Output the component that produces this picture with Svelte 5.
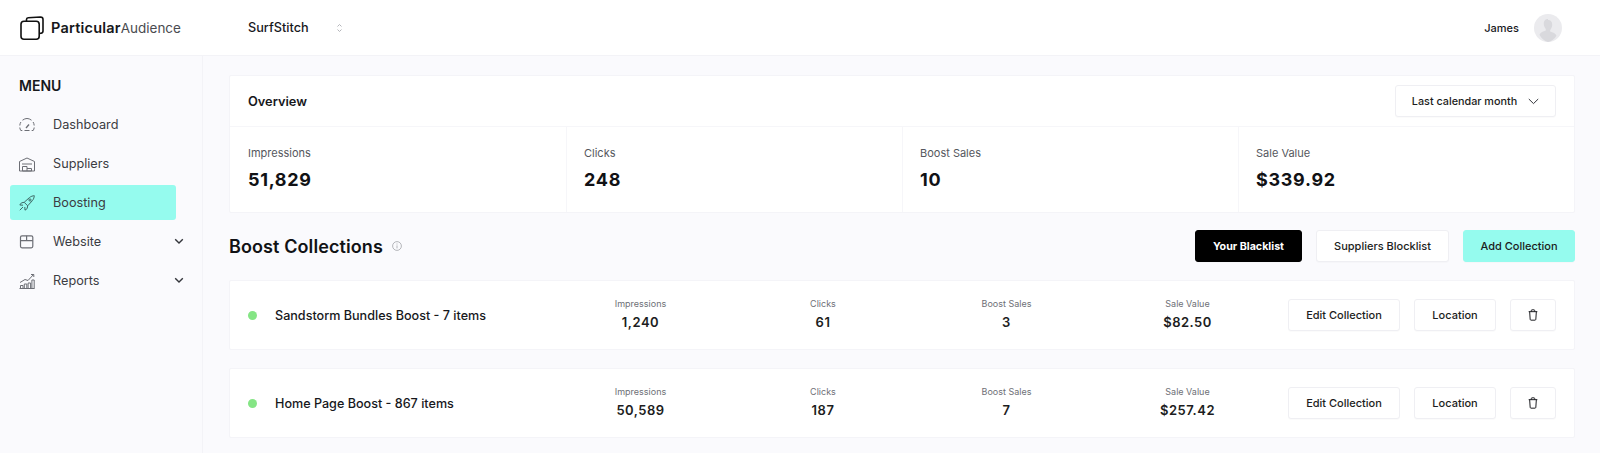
<script>
	const menu = [
		{ label: 'Dashboard', icon: 'gauge' },
		{ label: 'Suppliers', icon: 'warehouse' },
		{ label: 'Boosting', icon: 'rocket', active: true },
		{ label: 'Website', icon: 'box', more: true },
		{ label: 'Reports', icon: 'chart', more: true }
	];

	const overview = [
		{ label: 'Impressions', value: '51,829' },
		{ label: 'Clicks', value: '248' },
		{ label: 'Boost Sales', value: '10' },
		{ label: 'Sale Value', value: '$339.92' }
	];

	const collections = [
		{
			name: 'Sandstorm Bundles Boost - 7 items',
			stats: [
				{ label: 'Impressions', value: '1,240' },
				{ label: 'Clicks', value: '61' },
				{ label: 'Boost Sales', value: '3' },
				{ label: 'Sale Value', value: '$82.50' }
			]
		},
		{
			name: 'Home Page Boost - 867 items',
			stats: [
				{ label: 'Impressions', value: '50,589' },
				{ label: 'Clicks', value: '187' },
				{ label: 'Boost Sales', value: '7' },
				{ label: 'Sale Value', value: '$257.42' }
			]
		}
	];
</script>

<div class="page">
	<header class="topbar">
		<div class="brand">
			<svg width="24" height="24" viewBox="0 0 24 24" fill="none" stroke="#111" stroke-width="1.6" stroke-linejoin="round">
				<path d="M6.5 5.2 V3.6 Q6.500 2 8.200 1.800 L20.500 1 Q23 1 23 3.400 V15 Q23 17 21 17.200 L19.300 17.400" />
				<rect x="1" y="5.200" width="18.200" height="18" rx="3" />
			</svg>
			<span class="logotype"><b>Particular</b>Audience</span>
		</div>
		<div class="account">
			<span>SurfStitch</span>
			<svg width="7" height="10" viewBox="0 0 7 10" fill="none" stroke="#b4b5ba" stroke-width="1">
				<path d="M1.500 3.500 3.500 1.500 5.500 3.500M1.500 6.500 3.500 8.500 5.500 6.500" />
			</svg>
		</div>
		<div class="user">
			<span>James</span>
			<div class="avatar">
				<svg width="28" height="28" viewBox="0 0 28 28">
					<circle cx="14" cy="14" r="14" fill="#ebebee" />
					<path d="M14 5c-3 0-4.400 2.200-4.200 5 .1 2 .9 3.800 2 4.900v1.600c-2.500 1-5.600 1.800-6.300 4.200A14 14 0 0 0 14 28a14 14 0 0 0 8.500-6.300c-.7-2.400-3.800-3.200-6.300-4.200v-1.600c1.100-1.100 1.900-2.900 2-4.900.2-2.800-1.200-5-4.200-5z" fill="#d9d9dd" />
				</svg>
			</div>
		</div>
	</header>

	<div class="body">
		<aside class="sidebar">
			<h2>MENU</h2>
			<nav>
				{#each menu as item}
					<div class="item" class:active={item.active}>
						<svg class="icon" width="18" height="18" viewBox="0 0 18 18" fill="none" stroke-width="1">
							{#if item.icon === 'gauge'}
								<path d="M1.800 9.500A7.400 7.400 0 0 1 2.900 6M4.500 4.200A7.400 7.400 0 0 1 13.500 4.200M15.100 6A7.400 7.400 0 0 1 16.200 9.500" />
								<path d="M1.800 11.500q.1 1.600 1 3h1.500M16.200 11.500q-.1 1.600-1 3h-1.500M6.500 14.500h5" />
								<path d="M8 12 11 8.500" stroke-width="1.300" />
							{:else if item.icon === 'warehouse'}
								<path d="M1.500 16V6.500L9 3l7.500 3.500V16z" />
								<path d="M4 9h10M4.500 16v-4.500h4.500V16M9 13.500h4.500V16M4.500 16h9" />
							{:else if item.icon === 'rocket'}
								<path d="M6.200 8.300 11.500 3.500c1.500-1.200 3.300-1.700 4.800-1.800-.1 1.500-.6 3.300-1.800 4.800L9.700 11.800z" />
								<path d="M6.200 8.300 3.500 8.800 1.800 11l3.200.2M9.700 11.800 9.200 14.500 7 16.200l-.2-3.200" />
								<path d="M5 13 1.800 16.200" />
								<circle cx="12" cy="6" r="1.100" />
							{:else if item.icon === 'box'}
								<rect x="2.500" y="2.800" width="12.300" height="12" rx="1.500" stroke-width="1.200" />
								<path d="M2.500 7.600h12.300M8.600 2.800v4.800" stroke-width="1.200" />
							{:else}
								<path d="M1.500 16.500h15M2.500 16.500v-3h2.500v3M6.300 16.500v-4.500h2.500v4.500M10.100 16.500v-5.500h2.500v5.500M13.900 16.500V8h2.300v8.500" />
								<path d="M2 10.500 7 7.500l3 1 5.500-6M13 2.500h2.800v2.500" />
							{/if}
						</svg>
						<span class="label">{item.label}</span>
						{#if item.more}
							<svg class="chev" width="10" height="7" viewBox="0 0 10 7" fill="none" stroke="#33353b" stroke-width="1.400">
								<path d="M1.200 1.200 5 5l3.800-3.800" />
							</svg>
						{/if}
					</div>
				{/each}
			</nav>
		</aside>

		<main class="content">
			<section class="card overview">
				<div class="overview-head">
					<h3>Overview</h3>
					<button class="btn range">
						Last calendar month
						<svg width="11" height="7" viewBox="0 0 11 7" fill="none" stroke="#33353b" stroke-width="1">
							<path d="M.8 1 5.500 5.600 10.200 1" />
						</svg>
					</button>
				</div>
				<div class="overview-stats">
					{#each overview as stat}
						<div class="overview-stat">
							<div class="stat-label">{stat.label}</div>
							<div class="stat-value">{stat.value}</div>
						</div>
					{/each}
				</div>
			</section>

			<div class="section-head">
				<h1>Boost Collections</h1>
				<svg class="info" width="10" height="10" viewBox="0 0 10 10" fill="none" stroke="#a3a5aa" stroke-width=".8">
					<circle cx="5" cy="5" r="4.400" />
					<path d="M5 4.400v3M5 2.500v1" />
				</svg>
				<div class="actions">
					<button class="btn dark">Your Blacklist</button>
					<button class="btn blocklist">Suppliers Blocklist</button>
					<button class="btn mint">Add Collection</button>
				</div>
			</div>

			{#each collections as row}
				<section class="card row">
					<span class="dot"></span>
					<div class="name">{row.name}</div>
					<div class="row-stats">
						{#each row.stats as stat}
							<div class="row-stat">
								<div class="row-label">{stat.label}</div>
								<div class="row-value">{stat.value}</div>
							</div>
						{/each}
					</div>
					<div class="row-actions">
						<button class="btn edit">Edit Collection</button>
						<button class="btn location">Location</button>
						<button class="btn trash" aria-label="Delete">
							<svg width="10" height="12" viewBox="0 0 12 14" fill="none" stroke="#1c1d21" stroke-width="1.200" stroke-linejoin="round">
								<path d="M.8 3h10.400M2 3l.6 9.200q.1 1 1 1h4.800q.9 0 1-1L10 3M4 3V1.500q0-.7.7-.7h2.600q.7 0 .7.7V3" />
							</svg>
						</button>
					</div>
				</section>
			{/each}
		</main>
	</div>
</div>

<style>
	:global(body) {
		background: #fafafd;
		font-family: Inter, "Liberation Sans", sans-serif;
		color: #17181c;
	}

	.page {
		height: 453px;
		overflow: hidden;
		display: flex;
		flex-direction: column;
	}

	.topbar {
		height: 56px;
		flex: none;
		background: #fff;
		border-bottom: 1px solid #f3f3f7;
		display: flex;
		align-items: center;
		padding: 0 38px 0 20px;
		box-sizing: border-box;
	}
	.brand {
		width: 228px;
		display: flex;
		align-items: center;
		gap: 7px;
	}
	.logotype {
		font-size: 13.500px;
		font-weight: 400;
		color: #4a4b50;
		margin-top: -1px;
	}
	.logotype b {
		font-size: 14.500px;
		font-weight: 600;
		letter-spacing: 0.2px;
		color: #16171a;
	}
	.account {
		display: flex;
		align-items: center;
		gap: 27px;
		font-size: 12.700px;
		font-weight: 500;
	}
	.user {
		margin-left: auto;
		display: flex;
		align-items: center;
		gap: 15px;
		font-size: 11px;
		font-weight: 500;
	}
	.avatar {
		height: 28px;
	}

	.body {
		flex: 1;
		display: flex;
	}

	.sidebar {
		width: 203px;
		flex: none;
		box-sizing: border-box;
		border-right: 1px solid #f3f3f7;
		padding: 21px 0 0 10px;
	}
	.sidebar h2 {
		margin: 0 0 12px 9px;
		font-size: 14px;
		line-height: 18px;
		font-weight: 600;
	}
	nav {
		display: flex;
		flex-direction: column;
		gap: 4px;
		width: 166px;
	}
	.item {
		height: 35px;
		border-radius: 3px;
		display: flex;
		align-items: center;
		padding-left: 8px;
		font-size: 12.700px;
		color: #3b3c42;
		position: relative;
	}
	.item.active {
		background: #95fbee;
	}
	.icon {
		flex: none;
		margin-right: 17px;
		stroke: #6c6e75;
	}
	.item.active .icon {
		stroke: #3e6a66;
	}
	.chev {
		position: absolute;
		right: -8px;
		top: 14px;
	}

	.content {
		flex: 1;
		padding: 19px 25px 0 26px;
		min-width: 0;
	}

	.card {
		background: #fff;
		border: 1px solid #f4f4f8;
		border-radius: 2px;
		box-sizing: border-box;
	}

	.overview-head {
		height: 50px;
		display: flex;
		align-items: center;
		justify-content: space-between;
		padding: 0 18px;
		border-bottom: 1px solid #f6f6f9;
	}
	h3 {
		margin: 0;
		font-size: 12.800px;
		font-weight: 600;
	}
	.overview-stats {
		display: grid;
		grid-template-columns: repeat(4, 1fr);
		height: 85px;
	}
	.overview-stat {
		padding: 19px 17px 0;
		border-left: 1px solid #f6f6f9;
	}
	.overview-stat:first-child {
		border-left: 0;
		padding-left: 18px;
	}
	.stat-label {
		font-size: 11px;
		line-height: 14px;
		color: #55575d;
	}
	.stat-value {
		margin-top: 8px;
		font-size: 18px;
		line-height: 24px;
		font-weight: 700;
		letter-spacing: 0.7px;
		color: #111215;
	}

	.section-head {
		height: 32px;
		margin: 17px 0 18px;
		display: flex;
		align-items: center;
	}
	h1 {
		margin: 0;
		font-size: 18px;
		font-weight: 600;
		letter-spacing: 0.1px;
		color: #111215;
	}
	.info {
		margin-left: 9px;
	}
	.actions {
		margin-left: auto;
		display: flex;
		gap: 14px;
	}

	.btn {
		height: 32px;
		box-sizing: border-box;
		background: #fff;
		border: 1px solid #efeff3;
		border-radius: 3px;
		font-family: inherit;
		font-size: 11px;
		font-weight: 500;
		color: #1c1d21;
		padding: 0;
		display: flex;
		align-items: center;
		justify-content: center;
		box-shadow: 0 1px 1px rgba(20, 20, 40, 0.02);
	}
	.btn.dark {
		width: 107px;
		background: #000;
		border-color: #000;
		color: #fff;
		font-size: 10.700px;
		font-weight: 700;
	}
	.btn.blocklist {
		width: 133px;
	}
	.btn.mint {
		width: 112px;
		background: #95fbee;
		border-color: #95fbee;
	}
	.btn.range {
		width: 161px;
		gap: 11px;
		font-size: 10.800px;
	}

	.row {
		height: 70px;
		margin-bottom: 18px;
		display: flex;
		align-items: center;
		padding: 0 18px;
	}
	.dot {
		width: 9px;
		height: 9px;
		border-radius: 50%;
		background: #85e585;
		flex: none;
		margin-right: 18px;
	}
	.name {
		width: 274px;
		flex: none;
		font-size: 12.600px;
		font-weight: 500;
	}
	.row-stats {
		display: grid;
		grid-template-columns: 183px 182px 185px 177px;
		flex: none;
		padding-bottom: 2px;
	}
	.row-stat {
		text-align: center;
	}
	.row-label {
		font-size: 9px;
		line-height: 13px;
		color: #6e7076;
	}
	.row-value {
		margin-top: 4px;
		font-size: 13px;
		line-height: 17px;
		font-weight: 600;
		letter-spacing: 0.5px;
		color: #1c1d21;
	}
	.row-actions {
		margin-left: auto;
		display: flex;
		gap: 14px;
	}
	.btn.edit {
		width: 112px;
	}
	.btn.location {
		width: 82px;
	}
	.btn.trash {
		width: 46px;
	}
</style>
